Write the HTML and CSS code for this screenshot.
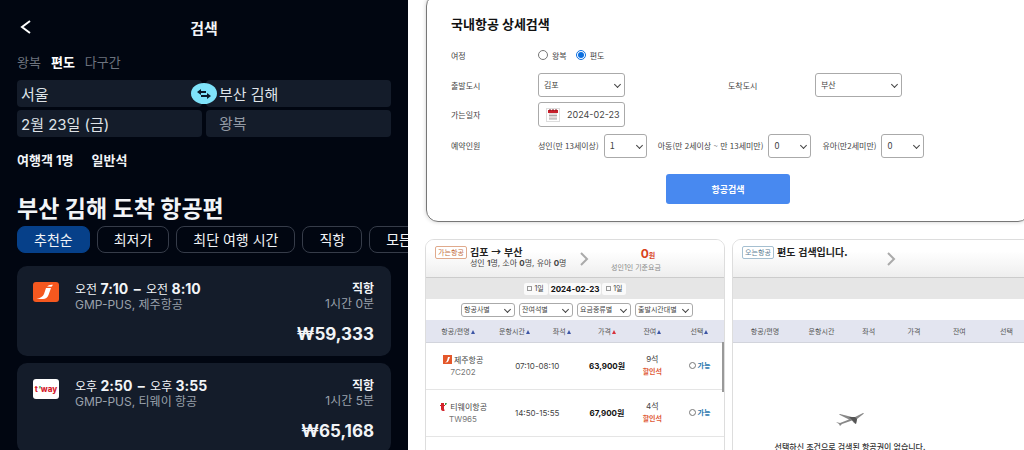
FILE: index.html
```html
<!DOCTYPE html>
<html lang="ko">
<head>
    <meta charset="UTF-8">
    <meta name="viewport" content="width=device-width, initial-scale=1.0">
    <title>항공권 검색</title>
    <link rel="stylesheet" href="styles.css">
</head>
<body>
    <div class="page">
        <!-- 모바일 검색 화면 -->
        <section class="mobile">
            <header class="mobile-header">
                <button class="back" type="button" aria-label="뒤로">
                    <svg width="12" height="16" viewBox="0 0 12 16"><path d="M10 2 L2 8 L10 14" fill="none" stroke="#fff" stroke-width="2"/></svg>
                </button>
                <h1>검색</h1>
            </header>

            <nav class="trip-tabs">
                <a href="#">왕복</a>
                <a href="#" class="active">편도</a>
                <a href="#">다구간</a>
            </nav>

            <form class="fields">
                <input type="text" value="서울" aria-label="출발지">
                <input type="text" class="right-field" value="부산 김해" aria-label="도착지">
                <input type="text" value="2월 23일 (금)" aria-label="가는 날">
                <input type="text" class="right-field" placeholder="왕복" aria-label="오는 날">
                <button class="swap" type="button" aria-label="출발지와 도착지 바꾸기">
                    <svg width="16" height="12" viewBox="0 0 16 12" fill="#0b1a2a">
                        <path d="M1 4 L5 1 V3 H10 V5 H5 V7 Z"/>
                        <path d="M15 8 L11 5 V7 H5 V9 H11 V11 Z"/>
                    </svg>
                </button>
            </form>

            <div class="passengers">
                <span>여행객 1명</span>
                <span>일반석</span>
            </div>

            <h2>부산 김해 도착 항공편</h2>

            <div class="chips">
                <button type="button" class="chip selected">추천순</button>
                <button type="button" class="chip">최저가</button>
                <button type="button" class="chip">최단 여행 시간</button>
                <button type="button" class="chip">직항</button>
                <button type="button" class="chip">모든</button>
            </div>

            <article class="flight">
                <svg class="airline-logo" width="26" height="20" viewBox="0 0 26 20">
                    <rect width="26" height="20" rx="3" fill="#f5581f"/>
                    <path d="M13 6 H18 L15.500 13 Q14 17 10 17 H3.500 Q9.500 15.500 11 12 Z" fill="#fff"/>
                    <path d="M14 4.500 Q16 2.300 20 2.800 L18.500 4.800 Z" fill="#fff"/>
                </svg>
                <div class="flight-main">
                    <p class="times">오전 <b>7:10</b> <b class="dash">–</b> 오전 <b>8:10</b></p>
                    <p class="sub">GMP-PUS, 제주항공</p>
                </div>
                <div class="flight-side">
                    <p class="direct">직항</p>
                    <p class="sub">1시간 0분</p>
                </div>
                <p class="price">₩59,333</p>
            </article>

            <article class="flight">
                <div class="airline-logo tway">t<i>'</i>way</div>
                <div class="flight-main">
                    <p class="times">오후 <b>2:50</b> <b class="dash">–</b> 오후 <b>3:55</b></p>
                    <p class="sub">GMP-PUS, 티웨이 항공</p>
                </div>
                <div class="flight-side">
                    <p class="direct">직항</p>
                    <p class="sub">1시간 5분</p>
                </div>
                <p class="price">₩65,168</p>
            </article>
        </section>

        <!-- 국내항공 상세검색 -->
        <main class="desktop">
            <form class="search-card">
                <h2>국내항공 상세검색</h2>
                <div class="row row-trip">
                    <span class="label">여정</span>
                    <label><input type="radio" name="trip"> 왕복</label>
                    <label><input type="radio" name="trip" checked> 편도</label>
                </div>
                <div class="row row-city">
                    <div class="half">
                        <label class="label" for="from">출발도시</label>
                        <span class="select"><select id="from"><option>김포</option></select></span>
                    </div>
                    <div class="half">
                        <label class="label" for="to">도착도시</label>
                        <span class="select"><select id="to"><option>부산</option></select></span>
                    </div>
                </div>
                <div class="row">
                    <label class="label" for="date">가는일자</label>
                    <div class="date-box">
                        <svg width="14" height="14" viewBox="0 0 14 14">
                            <rect x="0.500" y="0.500" width="13" height="13" fill="#fff" stroke="#ddd"/>
                            <rect x="3" y="5" width="8" height="6" fill="#e4dcdc"/>
                            <path d="M3 7.500 H11 M3 11 H11" stroke="#aaa" stroke-width="1"/>
                            <rect x="2" y="2" width="10" height="3" fill="#c8202c"/>
                            <path d="M4 1 V3 M7 1 V3 M10 1 V3" stroke="#7d141c"/>
                        </svg>
                        <input type="text" id="date" value="2024-02-23">
                    </div>
                </div>
                <div class="row row-people">
                    <span class="label">예약인원</span>
                    <label for="adult">성인(만 13세이상)</label>
                    <span class="select small"><select id="adult"><option>1</option></select></span>
                    <label for="child">아동(만 2세이상 ~ 만 13세미만)</label>
                    <span class="select small"><select id="child"><option>0</option></select></span>
                    <label for="infant">유아(만2세미만)</label>
                    <span class="select small"><select id="infant"><option>0</option></select></span>
                </div>
                <button class="search-btn" type="button">항공검색</button>
            </form>

            <div class="panels">
                <section class="panel">
                    <header class="panel-header">
                        <span class="badge">가는항공</span>
                        <div class="route">
                            <h3>김포 → 부산</h3>
                            <p>성인 <b>1</b>명, 소아 <b>0</b>명, 유아 <b>0</b>명</p>
                        </div>
                        <svg class="arrow" width="10" height="14" viewBox="0 0 10 14"><path d="M2 1 L8 7 L2 13" fill="none" stroke="#aaa" stroke-width="2"/></svg>
                        <div class="fare">
                            <p class="fare-total">0<small>원</small></p>
                            <p class="fare-note">성인1인 기준요금</p>
                        </div>
                    </header>
                    <div class="date-bar">
                        <button type="button"><i></i>1일</button>
                        <strong>2024-02-23</strong>
                        <button type="button"><i></i>1일</button>
                    </div>
                    <div class="filters">
                        <span class="select"><select aria-label="항공사별"><option>항공사별</option></select></span>
                        <span class="select"><select aria-label="잔여석별"><option>잔여석별</option></select></span>
                        <span class="select"><select aria-label="요금종류별"><option>요금종류별</option></select></span>
                        <span class="select"><select aria-label="출발시간대별"><option>출발시간대별</option></select></span>
                    </div>
                    <div class="table-wrap">
                        <table>
                            <colgroup>
                                <col class="col-airline"><col class="col-time"><col><col><col><col class="col-pick">
                            </colgroup>
                            <thead>
                                <tr>
                                    <th>항공/편명<i class="sort"></i></th>
                                    <th>운항시간<i class="sort"></i></th>
                                    <th>좌석<i class="sort"></i></th>
                                    <th>가격<i class="sort on"></i></th>
                                    <th>잔여<i class="sort"></i></th>
                                    <th>선택<i class="sort"></i></th>
                                </tr>
                            </thead>
                            <tbody>
                                <tr>
                                    <td class="airline">
                                        <svg width="9" height="9" viewBox="0 0 9 9"><rect width="9" height="9" fill="#e4572a"/><path d="M5 2 H7 L5.500 6 Q5 7.500 2 7.500 Q4 6.500 4.200 5 Z" fill="#fff"/></svg>
                                        제주항공<br><span>7C202</span>
                                    </td>
                                    <td colspan="2">07:10-08:10</td>
                                    <td class="won">63,900원</td>
                                    <td class="seats">9석<br><b>할인석</b></td>
                                    <td class="pick"><label><input type="radio" name="flight"> 가능</label></td>
                                </tr>
                                <tr>
                                    <td class="airline">
                                        <svg width="9" height="9" viewBox="0 0 9 9"><path d="M2 1 H5 V3 H6 V4 H5 V7 Q5 8 6 8 L5 9 Q2 9 2 7 V4 H1 V3 H2 Z" fill="#d2232a"/><path d="M6 1 H8 L7 3 H6 Z" fill="#3b9b4a"/></svg>
                                        티웨이항공<br><span>TW965</span>
                                    </td>
                                    <td colspan="2">14:50-15:55</td>
                                    <td class="won">67,900원</td>
                                    <td class="seats">4석<br><b>할인석</b></td>
                                    <td class="pick"><label><input type="radio" name="flight"> 가능</label></td>
                                </tr>
                            </tbody>
                        </table>
                        <span class="scrollbar"></span>
                    </div>
                </section>

                <section class="panel">
                    <header class="panel-header">
                        <span class="badge blue">오는항공</span>
                        <div class="route">
                            <h3>편도 검색입니다.</h3>
                        </div>
                        <svg class="arrow" width="10" height="14" viewBox="0 0 10 14"><path d="M2 1 L8 7 L2 13" fill="none" stroke="#aaa" stroke-width="2"/></svg>
                    </header>
                    <div class="date-bar"></div>
                    <div class="filters"></div>
                    <table>
                        <colgroup>
                            <col class="col-airline"><col class="col-time"><col><col><col><col class="col-pick">
                        </colgroup>
                        <thead>
                            <tr>
                                <th>항공/편명</th>
                                <th>운항시간</th>
                                <th>좌석</th>
                                <th>가격</th>
                                <th>잔여</th>
                                <th>선택</th>
                            </tr>
                        </thead>
                    </table>
                    <div class="empty">
                        <svg width="30" height="16" viewBox="0 0 30 16">
                            <path d="M1 10 L5 11 L14 7.500 L4 2.500 L5 2 L19 5.500 L28 1 L29 1.500 L22 7 L21 12 L19 11 L17 8.500 L7 12 L5 14 L4 12 Z" fill="#888"/>
                            <path d="M14 5 L20 5 L22 7 L21 12 L19 10 L17 8 Z" fill="#555"/>
                        </svg>
                        <p>선택하신 조건으로 검색된 항공권이 없습니다.</p>
                    </div>
                </section>
            </div>
        </main>
    </div>
</body>
</html>
```
FILE: styles.css
```css
* {
    box-sizing: border-box;
    margin: 0;
    padding: 0;
}

body {
    font-family: Inter, "Noto Sans CJK KR", sans-serif;
    background: #fff;
    overflow: hidden;
}

button,
input,
select {
    font-family: inherit;
    color: inherit;
}

a {
    color: inherit;
    text-decoration: none;
}

.page {
    display: grid;
    grid-template-columns: 408px 1fr;
    height: 100vh;
}

/* 모바일 */
.mobile {
    background: #010611;
    color: #f2f4f7;
    padding: 12px 17px 0;
    overflow: hidden;
}

.mobile-header {
    display: grid;
    grid-template-columns: 20px 1fr 20px;
    align-items: center;
    height: 30px;
}

.mobile-header h1 {
    font-size: 15px;
    text-align: center;
}

.back {
    background: none;
    border: none;
    height: 16px;
    cursor: pointer;
}

.back svg {
    display: block;
    margin-left: 3px;
}

.trip-tabs {
    display: flex;
    gap: 10px;
    height: 38px;
    align-items: center;
    font-size: 13px;
    color: #6d737e;
}

.trip-tabs .active {
    color: #fff;
    font-weight: 700;
}

.fields {
    position: relative;
    display: grid;
    grid-template-columns: 1fr 1fr;
    gap: 3px 4px;
}

.fields input {
    width: 100%;
    height: 27px;
    padding: 0 4px;
    border: none;
    border-radius: 4px;
    background: #141c2a;
    color: #dfe3e8;
    font-size: 15px;
}

.fields .right-field {
    padding-left: 13px;
}

.fields input::placeholder {
    color: #9299a4;
    opacity: 1;
}

.swap {
    position: absolute;
    top: 3px;
    left: 50%;
    width: 26px;
    height: 21px;
    margin-left: -13px;
    border: none;
    border-radius: 50%;
    background: #7fe3fa;
    display: flex;
    align-items: center;
    justify-content: center;
}

.passengers {
    display: flex;
    gap: 18px;
    height: 44px;
    align-items: center;
    font-size: 13px;
    font-weight: 700;
}

.mobile h2 {
    margin-top: 12px;
    font-size: 23px;
    line-height: 32px;
}

.chips {
    display: flex;
    gap: 7px;
    margin: 1px -17px 13px 0;
    overflow: hidden;
}

.chip {
    flex: none;
    height: 27px;
    padding: 0 16px;
    border: 1px solid #363c49;
    border-radius: 8px;
    background: none;
    font-size: 14px;
    line-height: 20px;
}

.chip.selected {
    background: #064089;
    border-color: #064089;
}

.flight {
    display: grid;
    grid-template-columns: 42px 1fr auto;
    padding: 14px 17px 10px 16px;
    margin-bottom: 7px;
    height: 90px;
    border-radius: 10px;
    background: #141c2a;
}

.airline-logo {
    width: 26px;
    height: 20px;
    margin-top: 2px;
}

.tway {
    border-radius: 3px;
    background: #fff;
    color: #d5202c;
    font-size: 8px;
    font-weight: 800;
    line-height: 20px;
    text-align: center;
}

.tway i {
    color: #3b9b4a;
}

.times,
.direct {
    font-size: 12px;
    line-height: 17px;
}

.times b {
    font-size: 14px;
}

.times .dash {
    margin: 0 2px;
}

.direct {
    font-weight: 700;
}

.sub {
    font-size: 12px;
    line-height: 14px;
    color: #9aa1ac;
}

.flight-side {
    text-align: right;
}

.price {
    grid-column: 1 / 4;
    align-self: end;
    text-align: right;
    font-size: 17px;
    font-weight: 700;
    line-height: 24px;
}

/* 상세검색 */
.desktop {
    padding-left: 17px;
    overflow: hidden;
    color: #444;
}

.search-card {
    width: 604px;
    margin: -6px 0 0 1px;
    padding: 17px 24px 17px;
    border: 1px solid #777;
    border-radius: 12px;
    box-shadow: 0 0 4px rgba(0, 0, 0, 0.2);
    font-size: 8px;
}

.search-card h2 {
    font-size: 13px;
    line-height: 24px;
    color: #111;
}

.row {
    display: flex;
    align-items: center;
    height: 31px;
}

.row-trip {
    height: 32px;
    margin-top: 3px;
}

.row-trip label {
    display: flex;
    align-items: center;
    gap: 4px;
    margin-right: 9px;
}

.row-trip input {
    width: 10px;
    height: 10px;
    accent-color: #0b6fe0;
}

.row-city {
    height: 28px;
}

.row-people {
    font-family: "Noto Sans CJK KR", sans-serif;
}

.half {
    display: flex;
    align-items: center;
    flex: 1;
}

.label {
    width: 87px;
}

.select {
    position: relative;
    display: inline-block;
    width: 87px;
}

.select select {
    display: block;
    appearance: none;
    width: 100%;
    height: 24px;
    padding: 0 5px;
    border: 1px solid #aaa;
    border-radius: 3px;
    background: #fff;
    font-size: 8px;
}

.select::after {
    content: "";
    position: absolute;
    right: 5px;
    top: calc(50% - 3px);
    width: 4px;
    height: 4px;
    border: solid #444;
    border-width: 0 1px 1px 0;
    transform: rotate(45deg);
    pointer-events: none;
}

.select.small {
    width: 43px;
    margin: 0 11px 0 5px;
}

.small select {
    font-size: 9px;
}

.date-box {
    display: flex;
    align-items: center;
    gap: 7px;
    width: 87px;
    height: 25px;
    padding-left: 7px;
    border: 1px solid #aaa;
    border-radius: 3px;
}

.date-box input {
    width: 56px;
    border: none;
    background: none;
    font-size: 9px;
}

.search-btn {
    display: block;
    width: 124px;
    height: 30px;
    margin: 13px auto 0;
    border: none;
    border-radius: 3px;
    background: #4889f0;
    color: #fff;
    font-size: 9px;
    font-weight: 700;
    cursor: pointer;
}

.panels {
    display: grid;
    grid-template-columns: 300px 300px;
    gap: 7px;
    margin-top: 17px;
}

.panel {
    min-height: 230px;
    border: 1px solid #ddd;
    border-radius: 9px;
    overflow: hidden;
}

.panel-header {
    display: flex;
    height: 38px;
    padding: 6px 0 0 9px;
    border-bottom: 1px solid #ccc;
    background: linear-gradient(#fff 30%, #eee);
}

.badge {
    width: 32px;
    height: 13px;
    border: 1px solid #e0aa8c;
    border-radius: 2px;
    background: #fff;
    color: #c46f45;
    font-size: 7px;
    line-height: 11px;
    text-align: center;
}

.badge.blue {
    border-color: #a5bfd0;
    color: #5f7f95;
}

.route {
    width: 112px;
    padding-left: 3px;
}

.route h3 {
    font-family: "Noto Sans CJK KR", sans-serif;
    font-size: 10px;
    line-height: 12px;
    color: #222;
}

.route p {
    font-size: 8px;
    line-height: 11px;
    white-space: nowrap;
}

.arrow {
    margin-top: 6px;
}

.fare {
    width: 84px;
    text-align: center;
    padding-left: 10px;
}

.fare-total {
    color: #d8431c;
    font-size: 12px;
    font-weight: 700;
    line-height: 15px;
    padding-left: 24px;
}

.fare-total small,
.fare-note {
    font-size: 7px;
}

.fare-note {
    color: #888;
    line-height: 9px;
}

.date-bar {
    display: flex;
    align-items: center;
    justify-content: center;
    gap: 1px;
    height: 21px;
    background: #e6e6e6;
}

.date-bar button,
.date-bar strong {
    height: 12px;
    border: none;
    border-radius: 2px;
    background: #fafafa;
    font-size: 7px;
    line-height: 12px;
}

.date-bar button {
    width: 24px;
}

.date-bar i {
    display: inline-block;
    width: 5px;
    height: 5px;
    margin-right: 2px;
    border: 1px solid #999;
}

.date-bar strong {
    padding: 0 2px;
    color: #111;
    font-size: 8px;
}

.filters {
    display: flex;
    align-items: center;
    gap: 4px;
    height: 21px;
    padding-left: 35px;
}

.filters .select {
    width: 54px;
}

.filters .select:last-child {
    width: 58px;
}

.filters select {
    height: 14px;
    padding: 0 2px;
    font-size: 7px;
}

.table-wrap {
    position: relative;
}

table {
    width: 100%;
    table-layout: fixed;
    border-collapse: collapse;
}

.col-airline {
    width: 64px;
}

.col-time,
.col-pick {
    width: 49px;
}

th {
    height: 22px;
    background: #e3e5f0;
    border-bottom: 1px solid #d2d4dc;
    color: #555;
    font-size: 7px;
    font-weight: 400;
    white-space: nowrap;
}

.sort {
    display: inline-block;
    margin-left: 1px;
    border: 2px solid transparent;
    border-top: none;
    border-bottom: 4px solid #3c55a5;
}

.sort.on {
    border-bottom-color: #d8323c;
}

td {
    height: 47px;
    border-bottom: 1px solid #e5e5e5;
    text-align: center;
    font-size: 8px;
    line-height: 12px;
    white-space: nowrap;
}

.airline {
    padding-left: 10px;
}

.airline svg {
    vertical-align: -1px;
}

.airline span {
    color: #777;
}

.won {
    color: #111;
    font-weight: 700;
}

.seats b {
    color: #e05a38;
    font-size: 7px;
}

.pick label {
    display: flex;
    align-items: center;
    justify-content: center;
    gap: 2px;
    color: #1f75ad;
    font-size: 7px;
    font-weight: 700;
}

.pick input {
    width: 7px;
    height: 7px;
}

.scrollbar {
    position: absolute;
    top: 22px;
    right: 0;
    width: 2px;
    height: 50px;
    background: #999;
}

.empty {
    display: flex;
    flex-direction: column;
    align-items: center;
    padding: 69px 64px 0 0;
    color: #333;
    font-size: 8px;
    font-weight: 500;
}

.empty p {
    margin-top: 12px;
    line-height: 14px;
}
```
